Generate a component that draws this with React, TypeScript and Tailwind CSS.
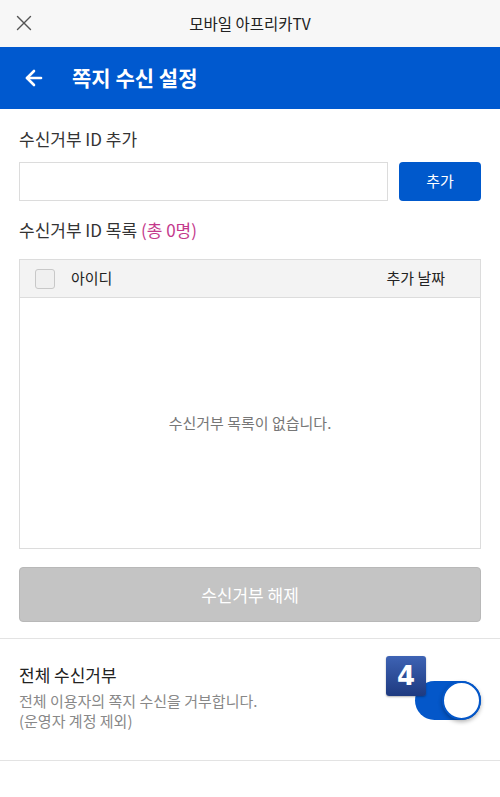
import { ArrowLeft, X } from "lucide-react";

export default function App() {
  return (
    <div
      className="w-[500px] h-[797px] bg-white overflow-hidden"
      style={{ fontFamily: '"Noto Sans CJK KR", "Noto Sans", sans-serif' }}
    >
      {/* Browser bar */}
      <div className="relative h-[47px] bg-[#f7f7f7] flex items-center justify-center">
        <X className="absolute left-[11px] top-[10px] w-[26px] h-[26px] text-[#555]" strokeWidth={1.3} />
        <span className="text-[15.5px] text-[#222]">모바일 아프리카TV</span>
      </div>

      {/* Page header */}
      <div className="h-[62px] bg-[#0059cf] flex items-center px-[22px] gap-[26px]">
        <ArrowLeft className="w-[24px] h-[24px] text-white" strokeWidth={2.6} />
        <h1 className="text-[21px] font-bold text-white">쪽지 수신 설정</h1>
      </div>

      <div className="px-[19px]">
        <p className="mt-[18px] text-[17px] text-[#333] leading-[24px]">수신거부 ID 추가</p>
        <div className="mt-[11px] flex gap-[11px]">
          <input className="flex-1 h-[39px] border border-[#dcdcdc] outline-none px-2" />
          <button className="w-[82px] h-[39px] rounded-[4px] bg-[#0059cc] text-white text-[15px]">
            추가
          </button>
        </div>

        <p className="mt-[17px] text-[17px] text-[#333] leading-[24px]">
          수신거부 ID 목록 <span className="text-[#c4398c]">(총 0명)</span>
        </p>

        <div className="mt-[17px] border border-[#dcdcdc]">
          <div className="h-[38px] bg-[#f3f3f3] border-b border-[#dcdcdc] flex items-center pl-[15px] pr-[35px] text-[15px] text-[#222]">
            <span className="w-[20px] h-[20px] border border-[#c8c8c8] rounded-[3px] bg-[#f0f0f0]" />
            <span className="ml-[16px] flex-1">아이디</span>
            <span>추가 날짜</span>
          </div>
          <div className="h-[250px] flex items-center justify-center text-[15px] text-[#777]">
            수신거부 목록이 없습니다.
          </div>
        </div>

        <button className="mt-[18px] w-full h-[55px] rounded-[4px] bg-[#c4c4c4] border border-[#b8b8b8] text-white text-[17px]">
          수신거부 해제
        </button>
      </div>

      <div className="mt-[16px] border-t border-[#e3e3e3]" />

      <div className="flex items-start justify-between px-[19px] pt-[24px] pb-[29px] border-b border-[#e3e3e3]">
        <div>
          <p className="text-[17px] text-[#222] leading-[24px]">전체 수신거부</p>
          <p className="mt-[4px] text-[15px] text-[#888] leading-[20px]">
            전체 이용자의 쪽지 수신을 거부합니다.
            <br />
            (운영자 계정 제외)
          </p>
        </div>
        <div className="relative mt-[18px] w-[66px] h-[39px]">
          <div className="absolute inset-0 rounded-full bg-[#0457c9]" />
          <div className="absolute right-0 top-0 w-[39px] h-[39px] rounded-full bg-white border-2 border-[#0457c9] shadow-[0_2px_4px_rgba(0,0,0,0.3)]" />
          <div className="absolute left-[-29px] top-[-25px] w-[40px] h-[40px] rounded-[3px] bg-gradient-to-b from-[#3e63b4] to-[#1e3a80] flex items-center justify-center shadow-[0_1px_2px_rgba(0,0,0,0.3)]">
            <span className="text-white font-bold text-[26px] leading-none" style={{ fontFamily: '"DejaVu Sans", sans-serif' }}>4</span>
          </div>
        </div>
      </div>
    </div>
  );
}
